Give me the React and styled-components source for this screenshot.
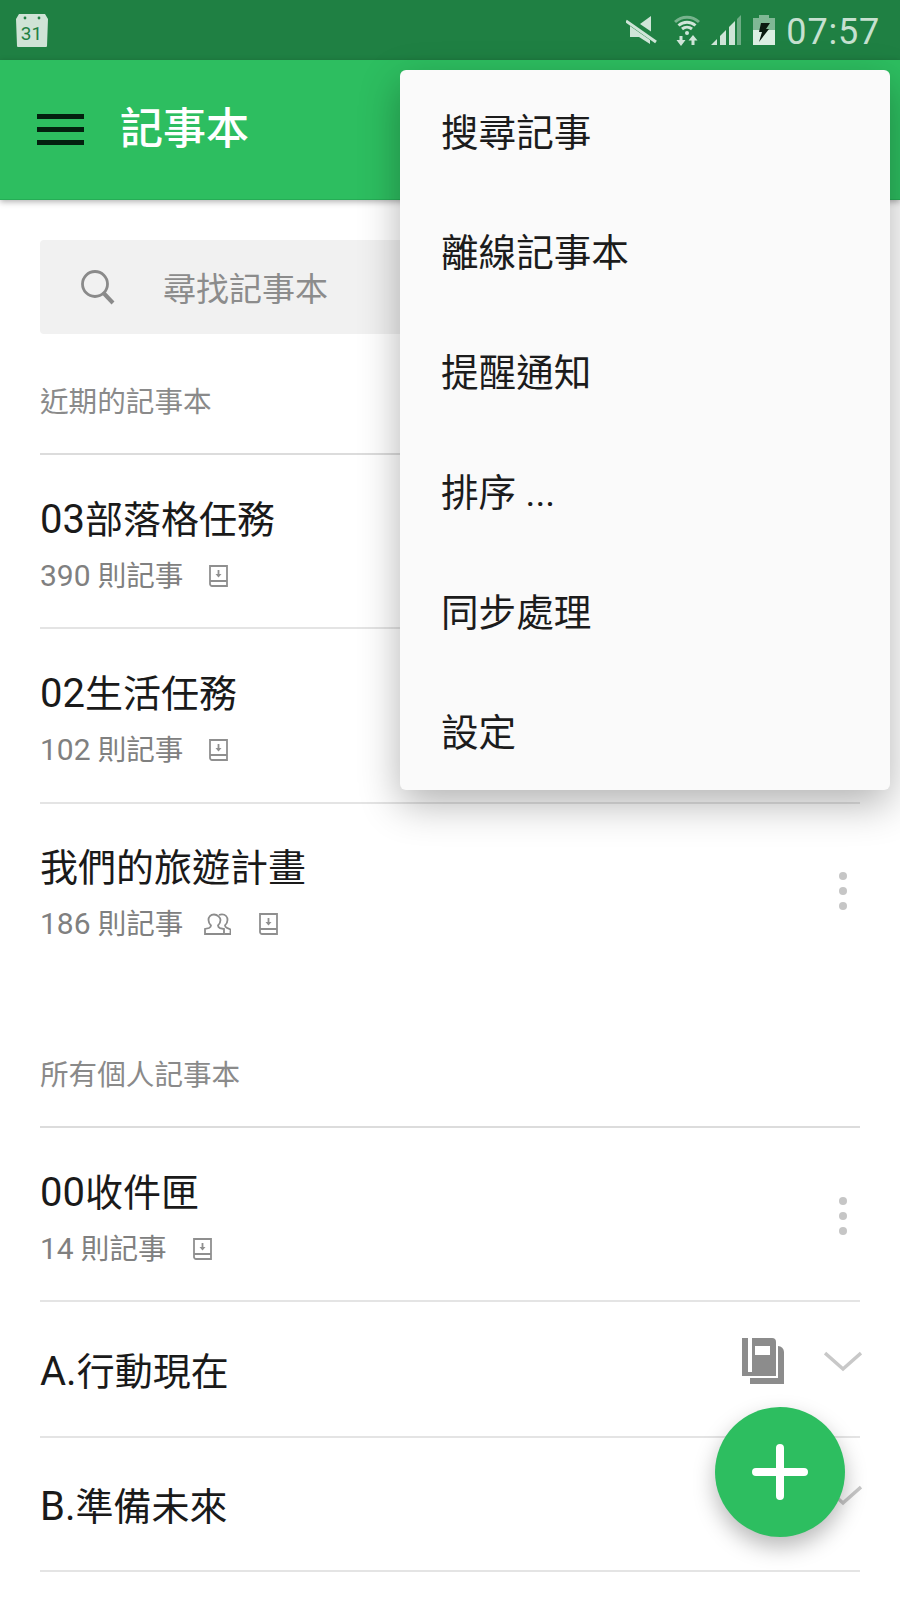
import React from 'react'
import styled, { createGlobalStyle } from 'styled-components'

const GlobalStyle = createGlobalStyle`
  html, body {
    margin: 0;
    padding: 0;
    background: #fff;
    font-family: Roboto, "Noto Sans CJK TC", sans-serif;
  }
`

const Page = styled.div`
  position: relative;
  width: 900px;
  height: 1600px;
  overflow: hidden;
  background: #fff;
`

const StatusBar = styled.div`
  height: 60px;
  background: #1f8043;
  display: flex;
  align-items: center;
  justify-content: space-between;
  padding: 0 20px 0 16px;
  box-sizing: border-box;
`

const StatusIcons = styled.div`
  display: flex;
  align-items: center;
`

const StatusSlot = styled.span`
  display: flex;
  margin-left: ${(p) => p.$gap || 0}px;
`

const Clock = styled.span`
  font-size: 36px;
  letter-spacing: 0.8px;
  margin: 3px 0 0 11px;
  color: #c6e0d0;
`

const AppBar = styled.div`
  height: 140px;
  background: #2dbe60;
  display: flex;
  align-items: center;
  padding-left: 37px;
  box-shadow: 0 2px 6px rgba(0, 0, 0, 0.3);
  position: relative;
  border-bottom: 1px solid #25ad55;
  box-sizing: border-box;
`

const Burger = styled.div`
  width: 47px;
  height: 31px;
  display: flex;
  flex-direction: column;
  justify-content: space-between;
  margin-right: 36px;

  span {
    display: block;
    height: 5px;
    background: #03210f;
  }
`

const Title = styled.h1`
  margin: 0;
  font-size: 43px;
  font-weight: 500;
  color: #fff;
  line-height: 1;
`

const Content = styled.div`
  padding: 40px 40px 0;
`

const SearchBox = styled.div`
  height: 94px;
  background: #f1f1f1;
  border-radius: 4px;
  display: flex;
  align-items: center;
  padding-left: 41px;
  font-size: 33px;

  span {
    margin-left: 48px;
    color: #8c8c8c;
  }
`

const SectionLabel = styled.div`
  font-size: 28.6px;
  line-height: 40px;
  color: #8a8a8a;
  padding-top: ${(p) => p.$top}px;
  padding-bottom: 31px;
  border-bottom: 2px solid #dcdcdc;
`

const Row = styled.div`
  display: flex;
  align-items: center;
  justify-content: space-between;
  height: ${(p) => p.$height}px;
  border-bottom: ${(p) => (p.$plain ? 'none' : '2px solid #e4e4e4')};
  box-sizing: border-box;
`

const RowText = styled.div`
  display: flex;
  flex-direction: column;
  margin-top: 8px;
`

const RowName = styled.div`
  font-size: 38px;
  line-height: 50px;
  color: #1a1a1a;
  margin-top: ${(p) => p.$shift || 0}px;
`

const Latin = styled.span`
  font-size: 40px;
`

const RowMeta = styled.div`
  display: flex;
  align-items: center;
  font-size: 28.6px;
  line-height: 40px;
  margin-top: 11px;
  color: #808080;
  white-space: pre;

  svg {
    margin-left: 26px;
  }
`

const MetaCount = styled.span`
  font-size: 30px;
`

const RowActions = styled.div`
  display: flex;
  align-items: center;
  gap: 40px;
  margin-right: -2px;
  margin-bottom: ${(p) => p.$lift}px;
`

const Kebab = styled.div`
  display: flex;
  flex-direction: column;
  gap: 7px;
  margin-right: 13px;
  margin-top: ${(p) => p.$shift || 0}px;

  i {
    width: 8px;
    height: 8px;
    border-radius: 50%;
    background: #c6c6c6;
  }
`

const Menu = styled.div`
  position: absolute;
  left: 400px;
  top: 70px;
  width: 490px;
  height: 720px;
  background: #fafafa;
  border-radius: 6px;
  box-shadow: 0 14px 40px rgba(0, 0, 0, 0.3);
`

const MenuItem = styled.div`
  height: 120px;
  display: flex;
  align-items: center;
  padding: 0 0 2px 41px;
  box-sizing: border-box;
  font-size: 37.6px;
  color: #1c1c1c;
`

const Fab = styled.div`
  position: absolute;
  left: 715px;
  top: 1407px;
  width: 130px;
  height: 130px;
  border-radius: 50%;
  background: #2dbe60;
  box-shadow: 0 10px 22px rgba(0, 0, 0, 0.28);
  display: flex;
  align-items: center;
  justify-content: center;
`

const CalendarIcon = () => (
  <svg width="32" height="33" viewBox="0 0 32 33">
    <path d="M3 0h26l3 5-1 27a1 1 0 0 1-1 1H2a1 1 0 0 1-1-1L0 5z" fill="#cfe3d6" />
    <circle cx="9" cy="4" r="1.4" fill="#1f8043" />
    <circle cx="23" cy="4" r="1.4" fill="#1f8043" />
    <text x="15.5" y="26" textAnchor="middle" fontSize="19" fontFamily="Roboto" fill="#1f8043">31</text>
  </svg>
)

const MuteIcon = () => (
  <svg width="31" height="30" viewBox="0 0 31 30" fill="#cfe5d8">
    <path d="M25 1L14 9l11 7.5z" />
    <path d="M4 11l20 14v4l-11-7H4z" />
    <path d="M0 6l30 21" stroke="#cfe5d8" strokeWidth="3" />
  </svg>
)

const WifiIcon = () => (
  <svg width="26" height="32" viewBox="0 0 26 32" fill="none" stroke="#cfe5d8" strokeWidth="3">
    <path d="M1 8c7-6.500 17-6.500 24 0" opacity="0.5" />
    <path d="M4.500 11.500c5-4.500 12-4.500 17 0" />
    <path d="M8 15c3-2.500 7-2.500 10 0" />
    <circle cx="13" cy="19" r="2" fill="#cfe5d8" stroke="none" />
    <path d="M7 22v6M19 25v6" />
    <path d="M2.500 26h9L7 32zM14.500 26.500h9L19 21z" fill="#cfe5d8" stroke="none" />
  </svg>
)

const SignalIcon = () => (
  <svg width="30" height="30" viewBox="0 0 30 30" fill="#cfe5d8">
    <path d="M0 30l6-6v6z" />
    <path d="M9 21l6-6v15H9z" />
    <path d="M18 12l6-6v24h-6z" />
    <path d="M26 4l4-4v30h-4z" opacity="0.45" />
  </svg>
)

const BatteryIcon = () => (
  <svg width="22" height="30" viewBox="0 0 22 30">
    <path d="M6 0h10v3h6v27H0V3h6z" fill="#cfe5d8" opacity="0.55" />
    <path d="M0 15h22v15H0z" fill="#dcefe3" />
    <path d="M8 8h9l-4 6h3L6 27l3-10H6z" fill="#0b1a10" />
  </svg>
)

const SearchIcon = () => (
  <svg width="34" height="35" viewBox="0 0 34 35" fill="none" stroke="#8a8a8a">
    <circle cx="14" cy="14" r="12.500" strokeWidth="2.800" />
    <path d="M23 23.500l9 9.500" strokeWidth="4" />
  </svg>
)

const SavedIcon = () => (
  <svg width="19" height="22" viewBox="0 0 19 22" fill="none" stroke="#8f8f8f" strokeWidth="1.800">
    <path d="M1 1h17v20H3a2 2 0 0 1-2-2zM1 16h17" />
    <path d="M9.500 5v6" />
    <path d="M6.500 9h6l-3 3.500z" fill="#8f8f8f" stroke="none" />
  </svg>
)

const SharedGlyph = styled.svg`
  && {
    margin: 0 2px 0 21px;
  }
`

const SharedIcon = () => (
  <SharedGlyph width="27" height="22" viewBox="0 0 27 22" fill="none" stroke="#8c8c8c" strokeWidth="1.800">
    <path d="M10 1.500c-3.500 0-5.500 2.500-5.500 5.500 0 2.500 1 4 2.500 5.500 0 1.500-1 2-2 2.500L1 16v5h19v-5l-4-.9c-1-.5-2-1-2-2.600 1.500-1.500 2.500-3 2.500-5.500S13.500 1.500 10 1.500z" />
    <path d="M15 2c1-.5 1.500-.6 3-.6 3.500 0 5.500 2.500 5.500 5.500 0 2.500-1 4-2.500 5.500 0 1.500 1 2 2 2.500l3.500 1.500v4.600h-6" />
  </SharedGlyph>
)

const StackIcon = () => (
  <svg width="42" height="46" viewBox="0 0 42 46" fill="#8c8c8c">
    <path d="M0 0h6v34h4V0h20a4 4 0 0 1 4 4v34H0z" />
    <path d="M13 8h15v9H13z" fill="#fff" />
    <path d="M36 8a6 6 0 0 1 6 6v32H8v-6h28z" />
  </svg>
)

const Chevron = () => (
  <svg width="38" height="21" viewBox="0 0 38 21" fill="none" stroke="#c8c8c8" strokeWidth="3.500">
    <path d="M1 2l18 16L37 2" />
  </svg>
)

const NotebookRow = ({ name, count, shared, height, kebab, kebabShift, plain }) => (
  <Row $height={height} $plain={plain}>
    <RowText>
      <RowName>{name}</RowName>
      <RowMeta>
        <MetaCount>{count}</MetaCount> 則記事
        {shared && <SharedIcon />}
        <SavedIcon />
      </RowMeta>
    </RowText>
    {kebab && (
      <Kebab $shift={kebabShift}>
        <i />
        <i />
        <i />
      </Kebab>
    )}
  </Row>
)

const menuItems = ['搜尋記事', '離線記事本', '提醒通知', '排序 ...', '同步處理', '設定']

export default function App() {
  return (
    <Page>
      <GlobalStyle />
      <StatusBar>
        <CalendarIcon />
        <StatusIcons>
          <StatusSlot>
            <MuteIcon />
          </StatusSlot>
          <StatusSlot $gap={17}>
            <WifiIcon />
          </StatusSlot>
          <StatusSlot $gap={11}>
            <SignalIcon />
          </StatusSlot>
          <StatusSlot $gap={12}>
            <BatteryIcon />
          </StatusSlot>
          <Clock>07:57</Clock>
        </StatusIcons>
      </StatusBar>
      <AppBar>
        <Burger>
          <span />
          <span />
          <span />
        </Burger>
        <Title>記事本</Title>
      </AppBar>
      <Content>
        <SearchBox>
          <SearchIcon />
          <span>尋找記事本</span>
        </SearchBox>
        <SectionLabel $top={48}>近期的記事本</SectionLabel>
        <NotebookRow name={<><Latin>03</Latin>部落格任務</>} count="390" height={174} />
        <NotebookRow name={<><Latin>02</Latin>生活任務</>} count="102" height={175} />
        <NotebookRow name="我們的旅遊計畫" count="186" shared height={170} kebab kebabShift={4} plain />
        <SectionLabel $top={81}>所有個人記事本</SectionLabel>
        <NotebookRow name={<><Latin>00</Latin>收件匣</>} count="14" height={174} kebab kebabShift={4} />
        <Row $height={136}>
          <RowName $shift={6}><Latin>A.</Latin>行動現在</RowName>
          <RowActions $lift={16}>
            <StackIcon />
            <Chevron />
          </RowActions>
        </Row>
        <Row $height={134}>
          <RowName $shift={6}><Latin>B.</Latin>準備未來</RowName>
          <RowActions $lift={18}>
            <Chevron />
          </RowActions>
        </Row>
      </Content>
      <Menu>
        {menuItems.map((item) => (
          <MenuItem key={item}>{item}</MenuItem>
        ))}
      </Menu>
      <Fab>
        <svg width="56" height="56" viewBox="0 0 56 56" stroke="#fff" strokeWidth="8" strokeLinecap="round">
          <path d="M28 4v48M4 28h48" />
        </svg>
      </Fab>
    </Page>
  )
}
